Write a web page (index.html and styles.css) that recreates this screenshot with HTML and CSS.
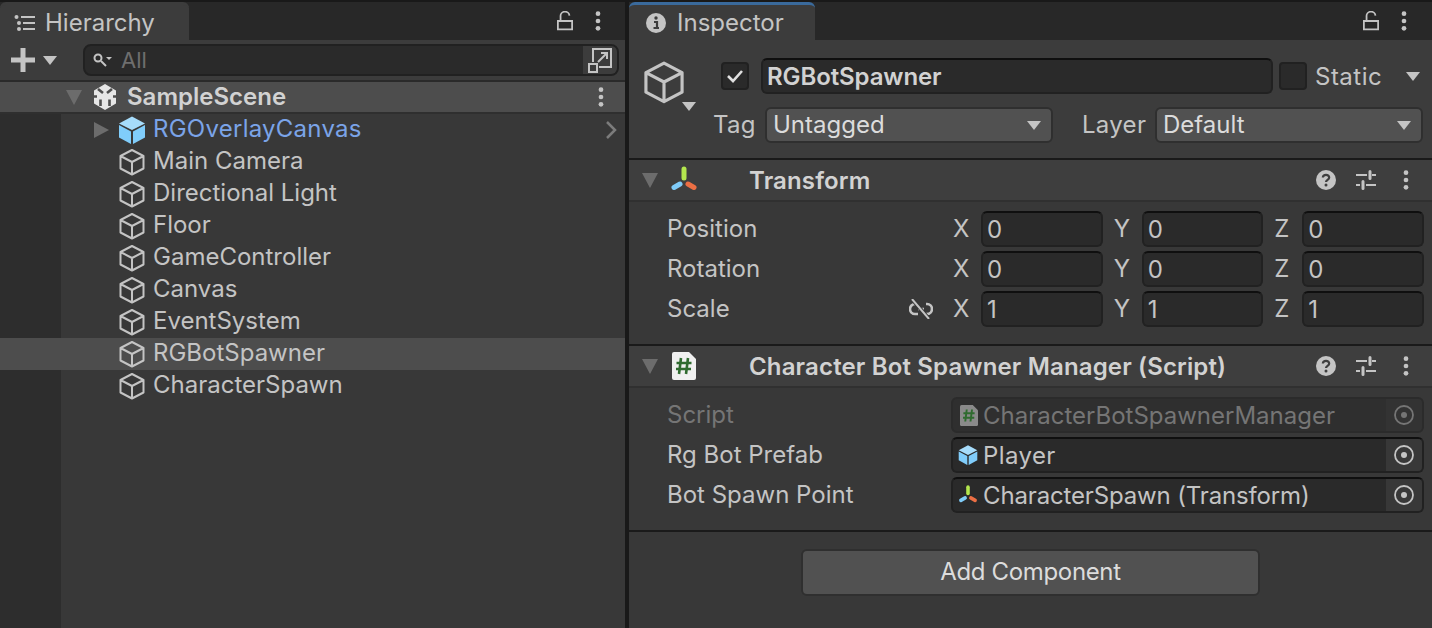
FILE: index.html
```html
<!DOCTYPE html>
<html>
<head>
    <title>Unity Editor</title>
    <link rel="stylesheet" href="styles.css">
</head>
<body>
    <svg class="defs" width="0" height="0">
        <symbol id="cube" viewBox="0 0 28 28">
            <path d="M14 2 25.500 8v12.500L14 26.500 2.500 20.500V8zM2.500 8 14 14l11.500-6M14 14v12.500" fill="none" stroke="currentColor" stroke-width="2" stroke-linejoin="round"/>
        </symbol>
        <symbol id="prefab" viewBox="0 0 28 28">
            <path d="M14 0.500 27 7.500 14 14 1 7.500z" fill="#a6dcfb"/>
            <path d="M1 9 13 15.500V28L1 21.500z" fill="#80cdfb"/>
            <path d="M27 9 15 15.500V28l12-6.500z" fill="#80cdfb"/>
        </symbol>
        <symbol id="kebab" viewBox="0 0 8 22">
            <circle cx="4" cy="3" r="2.600" fill="currentColor"/>
            <circle cx="4" cy="11" r="2.600" fill="currentColor"/>
            <circle cx="4" cy="19" r="2.600" fill="currentColor"/>
        </symbol>
        <symbol id="lock" viewBox="0 0 18 22">
            <path d="M1 11h16v9.500H1zM4 11V6a5 5 0 0 1 10-1" fill="none" stroke="currentColor" stroke-width="2"/>
        </symbol>
        <symbol id="axes" viewBox="0 0 28 28">
            <path d="M14 3v9" stroke="#b4e74e" stroke-width="5" stroke-linecap="round"/>
            <path d="M10 18 4 21.500" stroke="#7fcbf8" stroke-width="5" stroke-linecap="round"/>
            <path d="M18 18 24 21.500" stroke="#ec6f44" stroke-width="5" stroke-linecap="round"/>
        </symbol>
        <symbol id="help" viewBox="0 0 20 20">
            <circle cx="10" cy="10" r="10" fill="currentColor"/>
            <path d="M6.800 7.500C7 5.600 8.400 4.800 10 4.800c1.900 0 3.200 1.100 3.200 2.700 0 2.400-3.200 2.400-3.200 4.600" fill="none" stroke="#3e3e3e" stroke-width="2.200"/>
            <circle cx="10" cy="15" r="1.500" fill="#3e3e3e"/>
        </symbol>
        <symbol id="sliders" viewBox="0 0 20 20">
            <path d="M0 5h11M16 5h4M0 15h4M10 15h10" stroke="currentColor" stroke-width="2"/>
            <path d="M14 1.500v7M7 11.500v7" stroke="currentColor" stroke-width="3" stroke-linecap="round"/>
        </symbol>
        <symbol id="target" viewBox="0 0 20 20">
            <circle cx="10" cy="10" r="9" fill="none" stroke="currentColor" stroke-width="1.800"/>
            <circle cx="10" cy="10" r="3" fill="currentColor"/>
        </symbol>
        <symbol id="script" viewBox="0 0 24 28">
            <path d="M2 0h15l7 7v19a2 2 0 0 1-2 2H2a2 2 0 0 1-2-2V2a2 2 0 0 1 2-2z" fill="currentColor"/>
            <path d="M9 6 7 22M16 6l-2 16M4.500 11h15M4 17h15" stroke="#2f6b2f" stroke-width="2.600" fill="none"/>
        </symbol>
    </svg>

    <div class="editor">
        <section class="pane hierarchy">
            <div class="tabbar">
                <div class="tab">
                    <svg class="tab-icon" width="22" height="16" viewBox="0 0 22 16">
                        <path d="M7 2h14M9 8h12M9 14h12" stroke="#c4c4c4" stroke-width="2"/>
                        <circle cx="2.500" cy="2" r="2" fill="#c4c4c4"/>
                        <circle cx="5" cy="8" r="2" fill="#c4c4c4"/>
                        <circle cx="5" cy="14" r="2" fill="#c4c4c4"/>
                    </svg>
                    Hierarchy
                </div>
                <div class="tab-tools">
                    <svg class="lock" width="16" height="20"><use href="#lock"/></svg>
                    <svg class="kebab" width="8" height="20"><use href="#kebab"/></svg>
                </div>
            </div>
            <div class="toolbar">
                <svg class="plus" width="26" height="26" viewBox="0 0 26 26"><path d="M13 1v24M1 13h24" stroke="#c4c4c4" stroke-width="5"/></svg>
                <span class="arrow add-arrow"></span>
                <div class="search">
                    <svg class="search-icon" width="20" height="14" viewBox="0 0 20 14">
                        <circle cx="5" cy="5" r="3.500" fill="none" stroke="#c4c4c4" stroke-width="2"/>
                        <path d="m8 8 5 5" stroke="#c4c4c4" stroke-width="2"/>
                        <path d="M13 4h6l-3 3z" fill="#c4c4c4"/>
                    </svg>
                    <span class="search-text">All</span>
                    <span class="search-btn">
                        <svg width="26" height="26" viewBox="0 0 26 26">
                            <path d="M6 15V2h18v18H12M11 15l9-9M14 6h6v6" fill="none" stroke="#c4c4c4" stroke-width="2"/>
                            <rect x="2" y="17" width="8" height="8" fill="#3c3c3c" stroke="#c4c4c4" stroke-width="2"/>
                        </svg>
                    </span>
                </div>
            </div>
            <div class="scene-row">
                <span class="arrow fold-arrow scene-fold"></span>
                <svg class="scene-icon" width="26" height="26" viewBox="0 0 26 26">
                    <path d="M13 0 24 6.500V19.500L13 26 2 19.500V6.500z" fill="#e6e6e6"/>
                    <path d="M6 5 11 9M20 5 15 9M8.500 15.500V22M17.500 15.500V22M2 12.500h3M21 12.500h3" stroke="#4d4d4d" stroke-width="2.600" fill="none"/>
                </svg>
                <span class="scene-name">SampleScene</span>
                <svg class="kebab scene-kebab" width="8" height="20"><use href="#kebab"/></svg>
            </div>
            <div class="tree">
                <div class="tree-row prefab-row">
                    <span class="arrow side-arrow"></span>
                    <svg class="go-icon" width="28" height="28"><use href="#prefab"/></svg>
                    <span class="go-name prefab-name">RGOverlayCanvas</span>
                    <svg class="chevron" width="12" height="18" viewBox="0 0 12 18"><path d="m2 1 8 8-8 8" fill="none" stroke="#7c7c7c" stroke-width="2.500"/></svg>
                </div>
                <div class="tree-row"><svg class="go-icon" width="28" height="28"><use href="#cube"/></svg><span class="go-name">Main Camera</span></div>
                <div class="tree-row"><svg class="go-icon" width="28" height="28"><use href="#cube"/></svg><span class="go-name">Directional Light</span></div>
                <div class="tree-row"><svg class="go-icon" width="28" height="28"><use href="#cube"/></svg><span class="go-name">Floor</span></div>
                <div class="tree-row"><svg class="go-icon" width="28" height="28"><use href="#cube"/></svg><span class="go-name">GameController</span></div>
                <div class="tree-row"><svg class="go-icon" width="28" height="28"><use href="#cube"/></svg><span class="go-name">Canvas</span></div>
                <div class="tree-row"><svg class="go-icon" width="28" height="28"><use href="#cube"/></svg><span class="go-name">EventSystem</span></div>
                <div class="tree-row selected"><svg class="go-icon" width="28" height="28"><use href="#cube"/></svg><span class="go-name">RGBotSpawner</span></div>
                <div class="tree-row"><svg class="go-icon" width="28" height="28"><use href="#cube"/></svg><span class="go-name">CharacterSpawn</span></div>
            </div>
        </section>

        <section class="pane inspector">
            <div class="tabbar">
                <div class="tab active">
                    <svg class="tab-icon" width="20" height="20" viewBox="0 0 20 20">
                        <circle cx="10" cy="10" r="10" fill="#c4c4c4"/>
                        <path d="M8 9h3v6M7.500 15h5.500" fill="none" stroke="#3c3c3c" stroke-width="2.200"/>
                        <circle cx="10" cy="5" r="1.700" fill="#3c3c3c"/>
                    </svg>
                    Inspector
                </div>
                <div class="tab-tools">
                    <svg class="lock" width="16" height="20"><use href="#lock"/></svg>
                    <svg class="kebab" width="8" height="20"><use href="#kebab"/></svg>
                </div>
            </div>

            <div class="object-head">
                <div class="object-icon">
                    <svg class="big-cube" width="44" height="44"><use href="#cube"/></svg>
                    <span class="arrow cube-arrow"></span>
                </div>
                <div class="object-fields">
                    <div class="name-row">
                        <span class="check">
                            <svg width="18" height="14" viewBox="0 0 18 14"><path d="m2 7 5 5 9-10" fill="none" stroke="#e0e0e0" stroke-width="2.600"/></svg>
                        </span>
                        <span class="field name-field">RGBotSpawner</span>
                        <span class="check static-check"></span>
                        <span class="static-label">Static</span>
                        <span class="arrow static-arrow"></span>
                    </div>
                    <div class="tag-row">
                        <span class="tag-label">Tag</span>
                        <span class="dropdown tag-drop">Untagged<span class="arrow"></span></span>
                        <span class="tag-label layer-label">Layer</span>
                        <span class="dropdown layer-drop">Default<span class="arrow"></span></span>
                    </div>
                </div>
            </div>

            <div class="comp-head">
                <span class="arrow fold-arrow"></span>
                <svg class="comp-icon" width="28" height="28"><use href="#axes"/></svg>
                <span class="comp-title">Transform</span>
                <div class="comp-tools">
                    <svg width="20" height="20"><use href="#help"/></svg>
                    <svg width="20" height="20"><use href="#sliders"/></svg>
                    <svg class="kebab" width="8" height="20"><use href="#kebab"/></svg>
                </div>
            </div>
            <div class="comp-body">
                <div class="vec-row">
                    <span class="prop-label">Position</span>
                    <span class="axis">X</span><span class="field num">0</span>
                    <span class="axis">Y</span><span class="field num">0</span>
                    <span class="axis">Z</span><span class="field num">0</span>
                </div>
                <div class="vec-row">
                    <span class="prop-label">Rotation</span>
                    <span class="axis">X</span><span class="field num">0</span>
                    <span class="axis">Y</span><span class="field num">0</span>
                    <span class="axis">Z</span><span class="field num">0</span>
                </div>
                <div class="vec-row">
                    <span class="prop-label scale-label">Scale</span>
                    <svg class="unlink" width="24" height="20" viewBox="0 0 24 20">
                        <path d="M7 5H6a5 5 0 0 0 0 10h3M17 5h1a5 5 0 0 1 0 10h-3M9 10h6" fill="none" stroke="#c4c4c4" stroke-width="2.600"/>
                        <path d="m3 0 17 20" stroke="#383838" stroke-width="4"/>
                        <path d="m3 0 17 20" stroke="#c4c4c4" stroke-width="2"/>
                    </svg>
                    <span class="axis">X</span><span class="field num">1</span>
                    <span class="axis">Y</span><span class="field num">1</span>
                    <span class="axis">Z</span><span class="field num">1</span>
                </div>
            </div>

            <div class="comp-head script-head">
                <span class="arrow fold-arrow"></span>
                <svg class="comp-icon script-icon" width="24" height="28"><use href="#script"/></svg>
                <span class="comp-title">Character Bot Spawner Manager (Script)</span>
                <div class="comp-tools">
                    <svg width="20" height="20"><use href="#help"/></svg>
                    <svg width="20" height="20"><use href="#sliders"/></svg>
                    <svg class="kebab" width="8" height="20"><use href="#kebab"/></svg>
                </div>
            </div>
            <div class="comp-body">
                <div class="obj-row disabled">
                    <span class="prop-label">Script</span>
                    <span class="field obj-field">
                        <svg class="obj-icon small-script" width="18" height="21"><use href="#script"/></svg>
                        <span class="obj-text">CharacterBotSpawnerManager</span>
                        <span class="picker"><svg width="20" height="20"><use href="#target"/></svg></span>
                    </span>
                </div>
                <div class="obj-row">
                    <span class="prop-label">Rg Bot Prefab</span>
                    <span class="field obj-field">
                        <svg class="obj-icon" width="20" height="20"><use href="#prefab"/></svg>
                        <span class="obj-text player-text">Player</span>
                        <span class="picker"><svg width="20" height="20"><use href="#target"/></svg></span>
                    </span>
                </div>
                <div class="obj-row">
                    <span class="prop-label">Bot Spawn Point</span>
                    <span class="field obj-field">
                        <svg class="obj-icon" width="20" height="20"><use href="#axes"/></svg>
                        <span class="obj-text spawn-text">CharacterSpawn (Transform)</span>
                        <span class="picker"><svg width="20" height="20"><use href="#target"/></svg></span>
                    </span>
                </div>
            </div>

            <div class="add-wrap">
                <div class="add-btn">Add Component</div>
            </div>
        </section>
    </div>
</body>
</html>
```

FILE: styles.css
```css
* {
    box-sizing: border-box;
}

html, body {
    height: 100%;
    margin: 0;
    overflow: hidden;
}

body {
    background: #191919;
    color: #c4c4c4;
    font-family: Inter, "Noto Sans", sans-serif;
    font-size: 24px;
    line-height: 32px;
}

svg {
    display: block;
    flex: none;
}

.defs {
    position: absolute;
}

.editor {
    display: flex;
    height: 628px;
    padding-top: 2px;
    gap: 4px;
}

.pane {
    display: flex;
    flex-direction: column;
    background: #383838;
    overflow: hidden;
}

.hierarchy {
    width: 625px;
}

.inspector {
    flex: 1;
}

/* tab strip */
.tabbar {
    display: flex;
    justify-content: space-between;
    height: 38px;
    background: #282828;
    flex: none;
}

.tab {
    display: flex;
    align-items: center;
    width: 189px;
    padding-left: 14px;
    gap: 9px;
    background: #3c3c3c;
    border-top: 3px solid #3c3c3c;
    border-top-right-radius: 6px;
    border-top-left-radius: 6px;
}

.tab.active {
    width: 186px;
    padding-left: 17px;
    gap: 11px;
    border-top-color: #3a6a9c;
}

.tab-tools {
    display: flex;
    align-items: center;
    gap: 21px;
    padding-right: 23px;
}

.inspector .tab-tools {
    padding-right: 24px;
}

/* hierarchy toolbar */
.toolbar {
    display: flex;
    align-items: center;
    height: 42px;
    padding: 0 6px 0 10px;
    background: #3c3c3c;
    border-bottom: 2px solid #2a2a2a;
    flex: none;
}

.arrow {
    display: inline-block;
    width: 0;
    height: 0;
    border-left: 7px solid transparent;
    border-right: 7px solid transparent;
    border-top: 9px solid #c4c4c4;
    flex: none;
}

.add-arrow {
    margin: 0 26px 0 7px;
}

.search {
    display: flex;
    align-items: center;
    flex: 1;
    height: 32px;
    background: #2a2a2a;
    border: 2px solid #212121;
    border-radius: 8px;
    padding-left: 8px;
}

.search-text {
    margin-left: 8px;
    flex: 1;
    color: #6e6e6e;
    font-size: 22px;
}

.search-btn {
    display: flex;
    align-items: center;
    justify-content: center;
    width: 34px;
    height: 28px;
    background: #3c3c3c;
    border-radius: 0 6px 6px 0;
}

.scene-row {
    display: flex;
    align-items: center;
    height: 32px;
    padding-left: 66px;
    background: #4d4d4d;
    border-bottom: 2px solid #2f2f2f;
    flex: none;
}

.fold-arrow {
    border-left-width: 8px;
    border-right-width: 8px;
    border-top: 15px solid #6c6c6c;
}

.scene-icon {
    margin-left: 10px;
}

.scene-name {
    margin-left: 9px;
    flex: 1;
    font-weight: 600;
    color: #d2d2d2;
}

.scene-kebab {
    margin-right: 20px;
}

.tree {
    flex: 1;
    background: linear-gradient(90deg, #2d2d2d 61px, #383838 61px);
}

.tree-row {
    display: flex;
    align-items: center;
    gap: 7px;
    height: 32px;
    padding-left: 118px;
}

.go-name {
    padding-bottom: 2px;
}

.prefab-row {
    padding-left: 94px;
    color: #7ba4e8;
}

.prefab-name {
    letter-spacing: 0.25px;
}

.side-arrow {
    margin-right: 2px;
    border-top: 8px solid transparent;
    border-bottom: 8px solid transparent;
    border-left: 15px solid #6c6c6c;
    border-right: 0;
}

.chevron {
    margin-left: auto;
    margin-right: 8px;
}

.selected {
    background: #4d4d4d;
}

/* inspector header */
.object-head {
    display: flex;
    height: 120px;
    background: #3c3c3c;
    border-bottom: 2px solid #1a1a1a;
    flex: none;
}

.object-icon {
    display: flex;
    flex-direction: column;
    align-items: flex-end;
    width: 67px;
    padding-top: 20px;
}

.big-cube {
    margin-right: 10px;
}

.cube-arrow {
    margin-top: -2px;
}

.object-fields {
    flex: 1;
    padding-left: 17px;
}

.name-row {
    display: flex;
    align-items: center;
    height: 36px;
    margin-top: 18px;
}

.check {
    display: flex;
    align-items: center;
    justify-content: center;
    width: 28px;
    height: 28px;
    margin-left: 8px;
    background: #2a2a2a;
    border: 2px solid #212121;
    border-radius: 4px;
}

.field {
    background: #2a2a2a;
    border: 2px solid #212121;
    border-top-color: #0f0f0f;
    border-radius: 6px;
}

.name-field {
    width: 512px;
    height: 36px;
    margin-left: 12px;
    padding-left: 4px;
    font-weight: 600;
    line-height: 33px;
    letter-spacing: -0.1px;
    color: #d2d2d2;
}

.static-check {
    margin-left: 6px;
}

.static-label {
    margin-left: 8px;
    padding-top: 2px;
    letter-spacing: 0.5px;
}

.static-arrow {
    margin-left: 24px;
}

.tag-row {
    display: flex;
    align-items: center;
    height: 36px;
    margin-top: 13px;
}

.tag-label {
    width: 52px;
    flex: none;
    letter-spacing: 0.3px;
}

.layer-label {
    width: 73px;
    margin-left: 29px;
}

.dropdown {
    display: flex;
    align-items: center;
    justify-content: space-between;
    flex: none;
    height: 36px;
    padding: 0 10px 0 6px;
    background: #515151;
    border: 2px solid #2f2f2f;
    border-radius: 6px;
    color: #dcdcdc;
}

.tag-drop {
    width: 288px;
}

.layer-drop {
    width: 268px;
}

/* components */
.comp-head {
    display: flex;
    align-items: center;
    height: 42px;
    padding-left: 13px;
    background: #3e3e3e;
    border-bottom: 2px solid #303030;
    flex: none;
}

.comp-icon {
    margin-left: 12px;
}

.script-icon {
    margin-left: 14px;
    color: #f0f0f0;
}

.comp-title {
    flex: 1;
    margin-left: 51px;
    padding-top: 2px;
    font-weight: 600;
    letter-spacing: 0.15px;
    color: #d2d2d2;
}

.script-head .comp-title {
    margin-left: 53px;
}

.comp-tools {
    display: flex;
    align-items: center;
    gap: 20px;
    padding-right: 22px;
}

.comp-tools .kebab {
    margin-left: 6px;
}

.comp-body {
    height: 144px;
    background: #383838;
    border-bottom: 2px solid #1a1a1a;
    padding: 9px 8px 0 38px;
    flex: none;
}

.vec-row,
.obj-row {
    display: flex;
    align-items: center;
    height: 36px;
    margin-bottom: 4px;
}

.prop-label {
    width: 280px;
    flex: none;
}

.scale-label {
    width: 242px;
}

.unlink {
    margin-right: 14px;
}

.axis {
    width: 34px;
    padding-left: 6px;
    flex: none;
}

.num {
    flex: 1;
    height: 36px;
    padding-left: 4px;
    margin-right: 5px;
    line-height: 33px;
}

.num:last-child {
    margin-right: 0;
}

.obj-row .prop-label {
    width: 284px;
}

.obj-field {
    display: flex;
    align-items: center;
    flex: 1;
    height: 36px;
    padding-left: 5px;
    overflow: hidden;
}

.obj-icon {
    margin-right: 5px;
}

.small-script {
    margin-left: 2px;
    color: #8a8a8a;
}

.obj-text {
    flex: 1;
    margin-top: 1px;
}

.player-text {
    letter-spacing: 0.4px;
}

.spawn-text {
    letter-spacing: -0.15px;
}

.picker {
    display: flex;
    align-items: center;
    justify-content: center;
    width: 36px;
    height: 32px;
    background: #383838;
}

.disabled {
    color: #757575;
}

.disabled .obj-field {
    background: #2f2f2f;
    border-color: #2b2b2b;
}

.disabled .picker {
    background: #333333;
}

.add-wrap {
    display: flex;
    justify-content: center;
    flex: 1;
    padding-top: 17px;
}

.add-btn {
    width: 459px;
    height: 47px;
    line-height: 42px;
    letter-spacing: -0.35px;
    text-align: center;
    background: #515151;
    border: 2px solid #2f2f2f;
    border-radius: 6px;
    color: #dcdcdc;
}
```
